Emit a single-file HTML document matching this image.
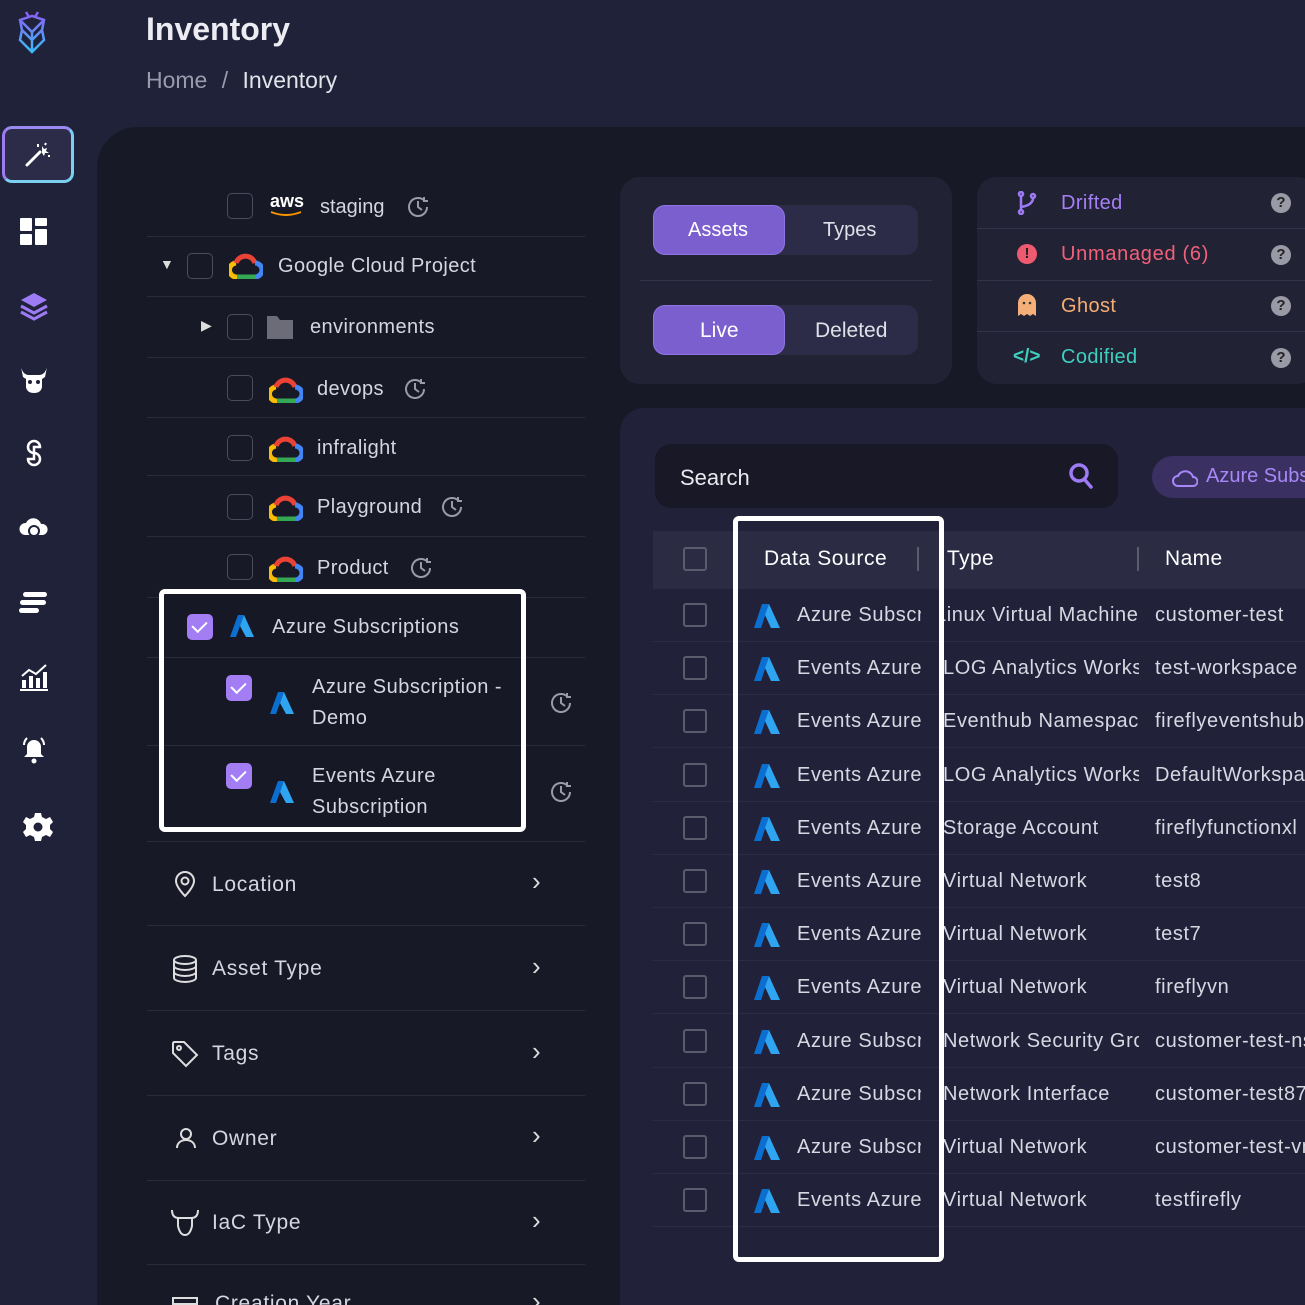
<!DOCTYPE html>
<html style="width:1305px;height:1305px;overflow:hidden"><head><meta charset="utf-8"><style>
*{margin:0;padding:0;box-sizing:border-box}
body{width:1305px;height:1305px;overflow:hidden;background:#20223a;font-family:"Liberation Sans",sans-serif;color:#d6d6e0;position:relative}
.a{position:absolute}
.t{position:absolute;white-space:nowrap}
.cb{position:absolute;width:26px;height:26px;border:1.5px solid #4a4b5e;border-radius:5px}
.cbc{position:absolute;width:26px;height:26px;background:#a27df3;border-radius:5px}
.cbc:after{content:"";position:absolute;left:8px;top:4px;width:7px;height:12px;border:solid #fff;border-width:0 2.5px 2.5px 0;transform:rotate(45deg)}
.line{position:absolute;left:147px;width:438px;height:1px;background:#2a2b3d}
.tl{position:absolute;left:653px;width:660px;height:1px;background:#2c2d45}
.tcb{position:absolute;left:683px;width:24px;height:24px;border:2px solid #5a5b6c;border-radius:3px}
.hist{position:absolute;width:26px;height:26px}
</style></head><body>
<svg class="a" style="left:14px;top:8px" width="36" height="46" viewBox="0 0 36 46"><defs><linearGradient id="lg" x1="0" y1="0" x2="0" y2="1"><stop offset="0" stop-color="#8b5cf6"/><stop offset="1" stop-color="#38bdf8"/></linearGradient></defs><path d="M12 4l3 5M24 4l-3 5M6 12l12-4 12 4-2 10 2 10-12 12-12-12 2-10zM6 12l12 12 12-12M8 22l10 10 10-10M18 24v20" fill="none" stroke="url(#lg)" stroke-width="2.5"/></svg>
<div class="t" style="left:146px;top:11px;font-size:32px;font-weight:bold;color:#ececf2">Inventory</div>
<div class="t" style="left:146px;top:67px;font-size:23px;color:#9a9bac">Home <span style="margin:0 8px">/</span> <span style="color:#e3e3ea">Inventory</span></div>
<div class="a" style="left:2px;top:126px;width:72px;height:57px;border-radius:10px;border:3px solid #7ad0f0;border-left-color:#9a7bf0;border-top-color:#9a8af0;background:#2c2b48"></div>
<svg class="a" style="left:24px;top:140px" width="28" height="28" viewBox="0 0 28 28"><path d="M3 25L16 12" stroke="#fff" stroke-width="3" stroke-linecap="round"/><path d="M18 6l2 3 3-1-1 3 3 2-4 0-1 3-2-3z" fill="#fff"/><path d="M14 4v3M24 16h2M22 3l-1 2" stroke="#fff" stroke-width="2"/></svg>
<svg class="a" style="left:20px;top:218px" width="28" height="28" viewBox="0 0 28 28" fill="#fff"><rect x="0" y="0" width="12" height="13" rx="1"/><rect x="15" y="0" width="12" height="8" rx="1"/><rect x="15" y="11" width="12" height="16" rx="1"/><rect x="0" y="16" width="12" height="11" rx="1"/></svg>
<svg class="a" style="left:19px;top:291px" width="30" height="30" viewBox="0 0 30 30"><path d="M15 2L28 9 15 16 2 9z" fill="#9d7bf5"/><path d="M2 15l13 7 13-7M2 21l13 7 13-7" fill="none" stroke="#9d7bf5" stroke-width="3"/></svg>
<svg class="a" style="left:19px;top:365px" width="30" height="30" viewBox="0 0 30 30" fill="#fff"><path d="M2 2q2 8 8 8h10q6 0 8-8l-2 10-3 2v8q-1 6-8 6t-8-6v-8l-3-2z"/><circle cx="11" cy="17" r="2" fill="#20223a"/><circle cx="19" cy="17" r="2" fill="#20223a"/></svg>
<svg class="a" style="left:20px;top:439px" width="28" height="28" viewBox="0 0 28 28" fill="none" stroke="#fff" stroke-width="2.5"><path d="M14 14a6 6 0 1 1 6-6h-6zM14 14a6 6 0 1 1-6 6h6z"/></svg>
<svg class="a" style="left:19px;top:513px" width="30" height="28" viewBox="0 0 30 28" fill="#fff"><path d="M6 22a6 6 0 0 1 1-12 8 8 0 0 1 15 1 5 5 0 0 1 2 11z"/><circle cx="15" cy="18" r="5" fill="none" stroke="#20223a" stroke-width="2"/></svg>
<svg class="a" style="left:19px;top:590px" width="30" height="26" viewBox="0 0 30 26" fill="#fff"><rect x="4" y="2" width="24" height="5" rx="2.5"/><rect x="1" y="10" width="26" height="5" rx="2.5"/><rect x="0" y="18" width="20" height="5" rx="2.5"/></svg>
<svg class="a" style="left:19px;top:662px" width="30" height="30" viewBox="0 0 30 30" fill="#fff"><rect x="3" y="18" width="4" height="8"/><rect x="10" y="14" width="4" height="12"/><rect x="17" y="16" width="4" height="10"/><rect x="24" y="10" width="4" height="16"/><rect x="1" y="27" width="28" height="2"/><path d="M3 14l7-6 7 4 10-9" stroke="#fff" stroke-width="2" fill="none"/></svg>
<svg class="a" style="left:19px;top:735px" width="30" height="30" viewBox="0 0 30 30" fill="#fff"><path d="M15 5a7 7 0 0 1 7 7v7l3 3H5l3-3v-7a7 7 0 0 1 7-7z"/><circle cx="15" cy="26" r="2.5"/><path d="M5 10q0-4 3-7M25 10q0-4-3-7" stroke="#fff" stroke-width="2" fill="none"/></svg>
<svg class="a" style="left:23px;top:812px" width="30" height="30" viewBox="0 0 30 30"><path d="M12 1h6l1 4 4 2 4-2 3 5-3 3v4l3 3-3 5-4-2-4 2-1 4h-6l-1-4-4-2-4 2-3-5 3-3v-4L0 10l3-5 4 2 4-2z" fill="#fff"/><circle cx="15" cy="15" r="4.5" fill="#20223a"/></svg>
<div class="a" style="left:97px;top:127px;width:1208px;height:1178px;background:#181927;border-radius:40px 0 0 0"></div>
<div class="line" style="top:236px"></div><div class="line" style="top:296px"></div><div class="line" style="top:357px"></div><div class="line" style="top:417px"></div><div class="line" style="top:475px"></div><div class="line" style="top:536px"></div><div class="line" style="top:597px"></div><div class="line" style="top:657px"></div><div class="line" style="top:745px"></div><div class="line" style="top:841px"></div><div class="line" style="top:925px"></div><div class="line" style="top:1010px"></div><div class="line" style="top:1095px"></div><div class="line" style="top:1180px"></div><div class="line" style="top:1264px"></div>

<div class="cb" style="left:227px;top:193px"></div>
<div class="t" style="left:270px;top:191px;font-size:18px;color:#fff;font-weight:bold">aws</div>
<svg class="a" style="left:270px;top:210px" width="34" height="8"><path d="M1 2q15 6 30 0" stroke="#f79400" stroke-width="2" fill="none"/></svg>
<div class="t" style="left:320px;top:196px;font-size:20px">staging</div>
<svg class="hist" style="left:405px;top:194px" viewBox="0 0 26 26" fill="none" stroke="#9a9aa8" stroke-width="2"><path d="M22 13a9 9 0 1 1-3-6.7"/><path d="M13 7v6l4 3M19 3v4h4"/></svg>

<div class="t" style="left:160px;top:256px;font-size:14px;color:#ddd">▼</div>
<div class="cb" style="left:187px;top:253px"></div>
<svg class="a" style="left:229px;top:253px" width="34" height="26" viewBox="0 0 34 26"><path d="M8 24a7 7 0 0 1-1-14" stroke="#fbbc04" stroke-width="5" fill="none"/><path d="M7 10a10 10 0 0 1 19 0" stroke="#ea4335" stroke-width="5" fill="none"/><path d="M26 10a7 7 0 0 1 0 14" stroke="#4285f4" stroke-width="5" fill="none"/><path d="M8 24h18" stroke="#34a853" stroke-width="5"/></svg>
<div class="t" style="left:278px;top:255px;font-size:20px;letter-spacing:.4px">Google Cloud Project</div>

<div class="t" style="left:201px;top:317px;font-size:14px;color:#ddd">▶</div>
<div class="cb" style="left:227px;top:314px"></div>
<svg class="a" style="left:267px;top:316px" width="26" height="23"><path d="M0 0h10l3 4h13v19H0z" fill="#6b6c78"/></svg>
<div class="t" style="left:310px;top:316px;font-size:20px;letter-spacing:.4px">environments</div>

<div class="cb" style="left:227px;top:375px"></div>
<svg class="a" style="left:269px;top:377px" width="34" height="26" viewBox="0 0 34 26"><path d="M8 24a7 7 0 0 1-1-14" stroke="#fbbc04" stroke-width="5" fill="none"/><path d="M7 10a10 10 0 0 1 19 0" stroke="#ea4335" stroke-width="5" fill="none"/><path d="M26 10a7 7 0 0 1 0 14" stroke="#4285f4" stroke-width="5" fill="none"/><path d="M8 24h18" stroke="#34a853" stroke-width="5"/></svg>
<div class="t" style="left:317px;top:378px;font-size:20px;letter-spacing:.4px">devops</div>
<svg class="hist" style="left:402px;top:376px" viewBox="0 0 26 26" fill="none" stroke="#9a9aa8" stroke-width="2"><path d="M22 13a9 9 0 1 1-3-6.7"/><path d="M13 7v6l4 3M19 3v4h4"/></svg>

<div class="cb" style="left:227px;top:435px"></div>
<svg class="a" style="left:269px;top:436px" width="34" height="26" viewBox="0 0 34 26"><path d="M8 24a7 7 0 0 1-1-14" stroke="#fbbc04" stroke-width="5" fill="none"/><path d="M7 10a10 10 0 0 1 19 0" stroke="#ea4335" stroke-width="5" fill="none"/><path d="M26 10a7 7 0 0 1 0 14" stroke="#4285f4" stroke-width="5" fill="none"/><path d="M8 24h18" stroke="#34a853" stroke-width="5"/></svg>
<div class="t" style="left:317px;top:437px;font-size:20px;letter-spacing:.4px">infralight</div>

<div class="cb" style="left:227px;top:494px"></div>
<svg class="a" style="left:269px;top:495px" width="34" height="26" viewBox="0 0 34 26"><path d="M8 24a7 7 0 0 1-1-14" stroke="#fbbc04" stroke-width="5" fill="none"/><path d="M7 10a10 10 0 0 1 19 0" stroke="#ea4335" stroke-width="5" fill="none"/><path d="M26 10a7 7 0 0 1 0 14" stroke="#4285f4" stroke-width="5" fill="none"/><path d="M8 24h18" stroke="#34a853" stroke-width="5"/></svg>
<div class="t" style="left:317px;top:496px;font-size:20px;letter-spacing:.4px">Playground</div>
<svg class="hist" style="left:439px;top:494px" viewBox="0 0 26 26" fill="none" stroke="#9a9aa8" stroke-width="2"><path d="M22 13a9 9 0 1 1-3-6.7"/><path d="M13 7v6l4 3M19 3v4h4"/></svg>

<div class="cb" style="left:227px;top:554px"></div>
<svg class="a" style="left:269px;top:556px" width="34" height="26" viewBox="0 0 34 26"><path d="M8 24a7 7 0 0 1-1-14" stroke="#fbbc04" stroke-width="5" fill="none"/><path d="M7 10a10 10 0 0 1 19 0" stroke="#ea4335" stroke-width="5" fill="none"/><path d="M26 10a7 7 0 0 1 0 14" stroke="#4285f4" stroke-width="5" fill="none"/><path d="M8 24h18" stroke="#34a853" stroke-width="5"/></svg>
<div class="t" style="left:317px;top:557px;font-size:20px;letter-spacing:.4px">Product</div>
<svg class="hist" style="left:408px;top:555px" viewBox="0 0 26 26" fill="none" stroke="#9a9aa8" stroke-width="2"><path d="M22 13a9 9 0 1 1-3-6.7"/><path d="M13 7v6l4 3M19 3v4h4"/></svg>

<div class="a" style="left:159px;top:589px;width:367px;height:243px;border:5px solid #fff;border-radius:6px;background:#171826"></div>
<div class="a" style="left:164px;top:657px;width:357px;height:1px;background:#2a2b3d"></div>
<div class="a" style="left:164px;top:745px;width:357px;height:1px;background:#2a2b3d"></div>
<div class="cbc" style="left:187px;top:614px"></div>
<svg class="a" style="left:230px;top:614px" width="24" height="24" viewBox="0 0 24 24"><path d="M8 1h6L6 23H0z" fill="#0a6fd0"/><path d="M14 1l10 22h-8L10 12z" fill="#2fa4f0"/></svg>
<div class="t" style="left:272px;top:616px;font-size:20px;letter-spacing:.5px">Azure Subscriptions</div>
<div class="cbc" style="left:226px;top:675px"></div>
<svg class="a" style="left:270px;top:691px" width="24" height="24" viewBox="0 0 24 24"><path d="M8 1h6L6 23H0z" fill="#0a6fd0"/><path d="M14 1l10 22h-8L10 12z" fill="#2fa4f0"/></svg>
<div class="t" style="left:312px;top:672px;font-size:20px;line-height:31px;letter-spacing:.5px">Azure Subscription -<br>Demo</div>
<div class="cbc" style="left:226px;top:763px"></div>
<svg class="a" style="left:270px;top:780px" width="24" height="24" viewBox="0 0 24 24"><path d="M8 1h6L6 23H0z" fill="#0a6fd0"/><path d="M14 1l10 22h-8L10 12z" fill="#2fa4f0"/></svg>
<div class="t" style="left:312px;top:761px;font-size:20px;line-height:31px;letter-spacing:.5px">Events Azure<br>Subscription</div>
<svg class="hist" style="left:548px;top:690px" viewBox="0 0 26 26" fill="none" stroke="#9a9aa8" stroke-width="2"><path d="M22 13a9 9 0 1 1-3-6.7"/><path d="M13 7v6l4 3M19 3v4h4"/></svg>
<svg class="hist" style="left:548px;top:779px" viewBox="0 0 26 26" fill="none" stroke="#9a9aa8" stroke-width="2"><path d="M22 13a9 9 0 1 1-3-6.7"/><path d="M13 7v6l4 3M19 3v4h4"/></svg>

<svg class="a" style="left:173px;top:870px" width="24" height="28" viewBox="0 0 24 28" fill="none" stroke="#ddd" stroke-width="2"><path d="M12 26s9-9 9-15a9 9 0 0 0-18 0c0 6 9 15 9 15z"/><circle cx="12" cy="11" r="3.5"/></svg>
<div class="t" style="left:212px;top:873px;font-size:21px;letter-spacing:.7px">Location</div>
<svg class="a" style="left:172px;top:955px" width="26" height="28" viewBox="0 0 26 28" fill="none" stroke="#ddd" stroke-width="2"><ellipse cx="13" cy="5" rx="11" ry="4"/><path d="M2 5v18c0 2 5 4 11 4s11-2 11-4V5M2 11c0 2 5 4 11 4s11-2 11-4M2 17c0 2 5 4 11 4s11-2 11-4"/></svg>
<div class="t" style="left:212px;top:957px;font-size:21px;letter-spacing:.7px">Asset Type</div>
<svg class="a" style="left:171px;top:1040px" width="28" height="28" viewBox="0 0 28 28" fill="none" stroke="#ddd" stroke-width="2"><path d="M2 3v10l13 13 11-11L13 2H3z"/><circle cx="8" cy="8" r="2"/></svg>
<div class="t" style="left:212px;top:1042px;font-size:21px;letter-spacing:.7px">Tags</div>
<svg class="a" style="left:175px;top:1127px" width="22" height="22" viewBox="0 0 22 22" fill="none" stroke="#ddd" stroke-width="2"><circle cx="11" cy="7" r="5"/><path d="M2 21c0-5 4-8 9-8s9 3 9 8"/></svg>
<div class="t" style="left:212px;top:1127px;font-size:21px;letter-spacing:.7px">Owner</div>
<svg class="a" style="left:170px;top:1208px" width="30" height="30" viewBox="0 0 30 30" fill="none" stroke="#ddd" stroke-width="2"><path d="M2 2q0 8 7 8h12q7 0 7-8M8 10v8q2 9 7 9t7-9v-8"/></svg>
<div class="t" style="left:212px;top:1211px;font-size:21px;letter-spacing:.7px">IaC Type</div>
<div class="t" style="left:215px;top:1292px;font-size:21px;letter-spacing:.7px">Creation Year</div>
<svg class="a" style="left:172px;top:1295px" width="26" height="20" viewBox="0 0 26 20" fill="none" stroke="#ddd" stroke-width="2"><rect x="1" y="3" width="24" height="20"/><path d="M1 9h24"/></svg>
<div class="t" style="left:532px;top:866px;font-size:26px;color:#ddd">›</div>
<div class="t" style="left:532px;top:951px;font-size:26px;color:#ddd">›</div>
<div class="t" style="left:532px;top:1036px;font-size:26px;color:#ddd">›</div>
<div class="t" style="left:532px;top:1120px;font-size:26px;color:#ddd">›</div>
<div class="t" style="left:532px;top:1205px;font-size:26px;color:#ddd">›</div>
<div class="t" style="left:532px;top:1286px;font-size:26px;color:#ddd">›</div>

<div class="a" style="left:620px;top:177px;width:332px;height:207px;background:#222235;border-radius:20px"></div>
<div class="a" style="left:653px;top:205px;width:265px;height:50px;background:#2d2c48;border-radius:12px"></div>
<div class="a" style="left:653px;top:205px;width:132px;height:50px;background:#7b5fcf;border-radius:12px;border:1px solid #8e74e4"></div>
<div class="t" style="left:688px;top:219px;font-size:20px;color:#fff">Assets</div>
<div class="t" style="left:823px;top:219px;font-size:20px;color:#e0e0e8">Types</div>
<div class="a" style="left:640px;top:280px;width:292px;height:1px;background:#33344a"></div>
<div class="a" style="left:653px;top:305px;width:265px;height:50px;background:#2d2c48;border-radius:12px"></div>
<div class="a" style="left:653px;top:305px;width:132px;height:50px;background:#7b5fcf;border-radius:12px;border:1px solid #8e74e4"></div>
<div class="t" style="left:700px;top:319px;font-size:21px;color:#fff">Live</div>
<div class="t" style="left:815px;top:319px;font-size:21px;color:#e0e0e8">Deleted</div>

<div class="a" style="left:977px;top:177px;width:340px;height:207px;background:#222235;border-radius:20px"></div>
<div class="a" style="left:977px;top:228px;width:330px;height:1px;background:#33344a"></div>
<div class="a" style="left:977px;top:280px;width:330px;height:1px;background:#33344a"></div>
<div class="a" style="left:977px;top:331px;width:330px;height:1px;background:#33344a"></div>
<svg class="a" style="left:1017px;top:191px" width="20" height="24" viewBox="0 0 20 24" fill="none" stroke="#9d7bf5" stroke-width="2.5"><circle cx="4" cy="3" r="2"/><circle cx="4" cy="21" r="2"/><circle cx="16" cy="5" r="2"/><path d="M4 5v14M16 7q0 7-12 9"/></svg>
<div class="t" style="left:1061px;top:192px;font-size:20px;color:#a57ff7;letter-spacing:.4px">Drifted</div>
<div class="a" style="left:1017px;top:244px;width:20px;height:20px;border-radius:50%;background:#ee5a70;color:#222;font-size:15px;font-weight:bold;text-align:center;line-height:20px">!</div>
<div class="t" style="left:1061px;top:243px;font-size:20px;color:#f3607a;letter-spacing:.7px">Unmanaged (6)</div>
<svg class="a" style="left:1018px;top:294px" width="18" height="22" viewBox="0 0 18 22"><path d="M0 9a9 9 0 0 1 18 0v13l-3-2-3 2-3-2-3 2-3-2-3 2z" fill="#f5b07a"/><circle cx="6" cy="9" r="1.3" fill="#333"/><circle cx="12" cy="9" r="1.3" fill="#333"/></svg>
<div class="t" style="left:1061px;top:295px;font-size:20px;color:#f5ad72;letter-spacing:.4px">Ghost</div>
<div class="t" style="left:1013px;top:346px;font-size:19px;color:#3fd0c0;font-weight:bold">&lt;/&gt;</div>
<div class="t" style="left:1061px;top:346px;font-size:20px;color:#3fcfc0;letter-spacing:.4px">Codified</div>
<div class="a" style="left:1271px;top:193px;width:20px;height:20px;border-radius:50%;background:#9a9aa6;color:#222;font-size:15px;font-weight:bold;text-align:center;line-height:20px">?</div>
<div class="a" style="left:1271px;top:245px;width:20px;height:20px;border-radius:50%;background:#9a9aa6;color:#222;font-size:15px;font-weight:bold;text-align:center;line-height:20px">?</div>
<div class="a" style="left:1271px;top:296px;width:20px;height:20px;border-radius:50%;background:#9a9aa6;color:#222;font-size:15px;font-weight:bold;text-align:center;line-height:20px">?</div>
<div class="a" style="left:1271px;top:348px;width:20px;height:20px;border-radius:50%;background:#9a9aa6;color:#222;font-size:15px;font-weight:bold;text-align:center;line-height:20px">?</div>

<div class="a" style="left:620px;top:408px;width:685px;height:897px;background:#21223a;border-radius:24px 0 0 0"></div>
<div class="a" style="left:655px;top:444px;width:463px;height:64px;background:#181827;border-radius:16px"></div>
<div class="t" style="left:680px;top:465px;font-size:22px;color:#e8e8ee">Search</div>
<svg class="a" style="left:1068px;top:462px" width="26" height="28" viewBox="0 0 26 28" fill="none" stroke="#9d7bf5" stroke-width="3.5"><circle cx="11" cy="11" r="8"/><path d="M17 18l6 7" stroke-linecap="round"/></svg>
<div class="a" style="left:1152px;top:456px;width:200px;height:42px;background:#3a3162;border-radius:21px"></div>
<svg class="a" style="left:1172px;top:466px" width="26" height="22" viewBox="0 0 26 22" fill="none" stroke="#a888f7" stroke-width="2"><path d="M6 20a5 5 0 0 1 0-10 8 8 0 0 1 15 1 4.5 4.5 0 0 1 0 9z"/></svg>
<div class="t" style="left:1206px;top:465px;font-size:20px;color:#a888f7">Azure Subs</div>

<div class="a" style="left:653px;top:531px;width:660px;height:58px;background:#2b2b44"></div>
<div class="a" style="left:683px;top:547px;width:24px;height:24px;border:2px solid #5a5b6c;border-radius:3px"></div>
<div class="t" style="left:764px;top:547px;font-size:21px;color:#fff;letter-spacing:.6px">Data Source</div>
<div class="a" style="left:917px;top:547px;width:2px;height:24px;background:#5a5b6c"></div>
<div class="t" style="left:947px;top:547px;font-size:21px;color:#fff;letter-spacing:.4px">Type</div>
<div class="a" style="left:1137px;top:547px;width:2px;height:24px;background:#5a5b6c"></div>
<div class="t" style="left:1165px;top:547px;font-size:21px;color:#fff;letter-spacing:.4px">Name</div>

<div class="tl" style="top:641px"></div><div class="tl" style="top:694px"></div><div class="tl" style="top:747px"></div><div class="tl" style="top:801px"></div><div class="tl" style="top:854px"></div><div class="tl" style="top:907px"></div><div class="tl" style="top:960px"></div><div class="tl" style="top:1013px"></div><div class="tl" style="top:1067px"></div><div class="tl" style="top:1120px"></div><div class="tl" style="top:1173px"></div><div class="tl" style="top:1226px"></div>

<div class="tcb" style="top:603px"></div><div class="tcb" style="top:656px"></div><div class="tcb" style="top:709px"></div><div class="tcb" style="top:763px"></div><div class="tcb" style="top:816px"></div><div class="tcb" style="top:869px"></div><div class="tcb" style="top:922px"></div><div class="tcb" style="top:975px"></div><div class="tcb" style="top:1029px"></div><div class="tcb" style="top:1082px"></div><div class="tcb" style="top:1135px"></div><div class="tcb" style="top:1188px"></div>
<svg class="a" style="left:754px;top:602px" width="26" height="620" viewBox="0 0 26 620">
<defs><g id="az"><path d="M8 2h7L7 26H0z" fill="#0a6fd0"/><path d="M15 2l11 24h-9L11 13z" fill="#2fa4f0"/></g></defs>
<use href="#az" y="0"/><use href="#az" y="53"/><use href="#az" y="106"/><use href="#az" y="160"/><use href="#az" y="213"/><use href="#az" y="266"/><use href="#az" y="319"/><use href="#az" y="372"/><use href="#az" y="426"/><use href="#az" y="479"/><use href="#az" y="532"/><use href="#az" y="585"/>
</svg>
<div class="a" style="left:797px;top:589px;width:124px;height:640px;overflow:hidden;font-size:20px;line-height:53.2px;color:#d8d8e2;white-space:nowrap;letter-spacing:.6px">Azure Subscription<br>Events Azure<br>Events Azure<br>Events Azure<br>Events Azure<br>Events Azure<br>Events Azure<br>Events Azure<br>Azure Subscription<br>Azure Subscription<br>Azure Subscription<br>Events Azure</div>
<div class="a" style="left:943px;top:589px;width:196px;height:640px;overflow:hidden;font-size:20px;line-height:53.2px;color:#d8d8e2;white-space:nowrap;letter-spacing:.6px;text-indent:-8px">Linux Virtual Machine<br>LOG Analytics Workspace<br>Eventhub Namespace<br>LOG Analytics Workspace<br>Storage Account<br>Virtual Network<br>Virtual Network<br>Virtual Network<br>Network Security Group<br>Network Interface<br>Virtual Network<br>Virtual Network</div>
<div class="a" style="left:1155px;top:589px;width:160px;height:640px;overflow:hidden;font-size:20px;line-height:53.2px;color:#d8d8e2;white-space:nowrap;letter-spacing:.6px">customer-test<br>test-workspace<br>fireflyeventshub<br>DefaultWorkspace<br>fireflyfunctionxl<br>test8<br>test7<br>fireflyvn<br>customer-test-nsg<br>customer-test87<br>customer-test-vnet<br>testfirefly</div>
<div class="a" style="left:733px;top:516px;width:211px;height:746px;border:5px solid #fff;border-radius:6px"></div>
</body></html>
